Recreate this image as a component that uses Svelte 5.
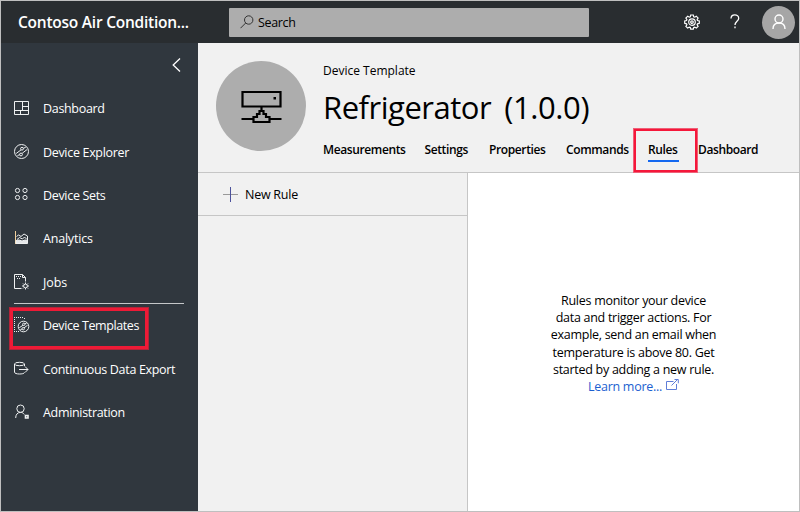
<script>
  const main = [
    { id: 'dashboard', label: 'Dashboard' },
    { id: 'explorer', label: 'Device Explorer' },
    { id: 'sets', label: 'Device Sets' },
    { id: 'analytics', label: 'Analytics' },
    { id: 'jobs', label: 'Jobs' }
  ];
  const secondary = [
    { id: 'templates', label: 'Device Templates', marked: true },
    { id: 'export', label: 'Continuous Data Export' },
    { id: 'admin', label: 'Administration' }
  ];
  const tabs = [
    { label: 'Measurements', width: 81.5 },
    { label: 'Settings', width: 44.5 },
    { label: 'Properties', width: 57 },
    { label: 'Commands', width: 62 },
    { label: 'Rules', width: 30, active: true },
    { label: 'Dashboard', width: 61 }
  ];
</script>

{#snippet glyph(id)}
  <svg class="glyph" width="16" height="16" viewBox="0 0 16 16">
    {#if id === 'dashboard'}
      <path d="M.5 1.500h14v13H.5zM.5 10.500h14M8.500 1.500v9M8.500 6.500h6M6.500 10.500v4" />
    {:else if id === 'explorer'}
      <circle cx="7.500" cy="7.500" r="7" />
      <circle cx="8" cy="4.700" r="1.400" /><circle cx="7" cy="10.500" r="1.400" />
      <path d="M7 5.900 2.200 9.500M8.200 9.300l4.900-3.800M3.500 11.500l2.200-.8M9.300 4.300l2.400-1" />
    {:else if id === 'sets'}
      <circle cx="3.500" cy="3.500" r="2.100" /><circle cx="11" cy="3.500" r="2.100" />
      <circle cx="3.500" cy="10.500" r="2.100" /><circle cx="11" cy="10.500" r="2.100" />
    {:else if id === 'analytics'}
      <path d="M1.500 1v13" stroke="#f1cf9a" /><path class="fill" d="M2 10.500l3-.5 3 1 3-1 2.500.5v3H2z" />
      <path d="M2.500 6.500l2-1.500 2.500 1.500 3-2.500 3.500 2v5M3 9.500l2.500-2 3 1.500 2-2 2.500 2.500" />
    {:else if id === 'jobs'}
      <path d="M7.500 14.500h-7V.5h8l3 3v4M8.500.5v3h3" /><path d="M2 2.500h5M3 4.500h4" stroke-dasharray="1 1" />
      <circle cx="11.500" cy="12" r="1.900" />
      <path d="M11.500 8.500v1.500M11.500 14v1.500M8 12h1.500M13.500 12H15M9 9.500l1 1M13 13.500l1 1M9 14.500l1-1M13 10.500l1-1" />
    {:else if id === 'templates'}
      <path d="M.5 0v15M2 .5h8M10.500 1v2M2 14.500h3" stroke-dasharray="1 1" />
      <circle cx="9.500" cy="9.500" r="5.300" />
      <circle cx="9.800" cy="7.300" r="1.200" /><circle cx="9.200" cy="11.700" r="1.200" />
      <path d="M9 8.300 5.300 10.700M10 10.900l3.600-2.700M10.800 6.900l1.900-.9M8.200 12l-1.800.6" />
    {:else if id === 'export'}
      <ellipse cx="5.500" cy="3" rx="5" ry="1.700" />
      <path d="M.5 3v8.200c0 2.300 9.500 2.400 10 .3M10.500 3v2M5 8.500h9M11 5.500l3 3-3 3" />
    {:else}
      <circle cx="6.500" cy="4.700" r="3.700" />
      <path d="M1.700 14c0-3.500 1.800-5.600 4.800-5.600 1.700 0 3 .8 3.800 2.100" /><path d="M11.500 11.500h2.500V14h-2.500z" stroke-width="1.600" />
    {/if}
  </svg>
{/snippet}

{#snippet navItem(item)}
  <li class={item.id}>
    {@render glyph(item.id)}
    <span>{item.label}</span>
    {#if item.marked}<i class="mark"></i>{/if}
  </li>
{/snippet}

<div class="app">
  <header class="top">
    <div class="brand">Contoso Air Condition...</div>
    <div class="search">
      <svg width="14" height="14" viewBox="0 0 14 14"><circle cx="8.700" cy="5" r="4.200" /><path d="M5.700 8 .5 13.200" /></svg>
      <span>Search</span>
    </div>
    <div class="tools">
      <svg class="gear" width="16" height="16" viewBox="0 0 16 16">
        <path d="M6.700 1h2.600l.4 1.800 1 .4 1.600-1 1.800 1.800-1 1.600.4 1 1.800.4v2.300l-1.800.5-.4 1 1 1.500-1.800 1.800-1.600-1-1 .4-.4 1.700H6.700l-.4-1.700-1-.4-1.600 1-1.800-1.800 1-1.500-.4-1L.7 9.300V7l1.800-.4.4-1-1-1.600 1.800-1.800 1.600 1 1-.4z" />
        <circle cx="8" cy="8.100" r="3.300" /><circle cx="8" cy="8.100" r="1.300" />
      </svg>
      <svg class="help" width="12" height="16" viewBox="0 0 12 16"><path d="M2 4.500C2 2 3.800.8 5.800.8S9.700 2 9.700 4.200C9.700 7.200 6 7.300 6 11" /><path d="M6 12.500v1.700" /></svg>
      <div class="avatar">
        <svg width="14" height="16" viewBox="0 0 14 16"><circle cx="7" cy="5" r="4" /><path d="M1 15C1 11.200 3.500 9 7 9s6 2.200 6 6" /></svg>
      </div>
    </div>
  </header>

  <div class="body">
    <nav>
      <svg class="collapse" width="9" height="14" viewBox="0 0 9 14"><path d="M8 .5 1.200 7 8 13.500" /></svg>
      <ul>
        {#each main as item}{@render navItem(item)}{/each}
      </ul>
      <hr />
      <ul>
        {#each secondary as item}{@render navItem(item)}{/each}
      </ul>
    </nav>

    <main>
      <section class="title">
        <div class="badge">
          <svg width="42" height="36" viewBox="0 0 42 36">
            <path d="M2.500 3h38v14.500h-38zM21.500 17.500V22M1.500 30H13M29.500 30h12M13.500 28h3.500v-3h2.500v-3h4v3h2.500v3h3.500v5h-16z" />
            <path class="dot" d="M33.500 8H36v2.500h-2.500z" />
          </svg>
        </div>
        <div class="info">
          <div class="kind">Device Template</div>
          <h1><span class="name">Refrigerator</span><span class="version">(1.0.0)</span></h1>
          <div class="tabs">
            {#each tabs as tab}
              <div class="tab {tab.label.toLowerCase()}" class:active={tab.active} style:width="{tab.width}px">
                {tab.label}
                {#if tab.active}<i class="mark"></i>{/if}
              </div>
            {/each}
          </div>
        </div>
      </section>

      <div class="panes">
        <aside>
          <div class="new">
            <svg width="15" height="15" viewBox="0 0 15 15"><path d="M0 7.500h15" stroke="#999" /><path d="M7.500 0v15" stroke="#4c529c" /></svg>
            <span>New Rule</span>
          </div>
        </aside>
        <section class="empty">
          <p>
            <span>Rules monitor your device</span><span>data and trigger actions. For</span><span>example, send an email when</span><span>temperature is above 80. Get</span><span>started by adding a new rule.</span>
            <a href="#learn"><span>Learn more...</span><svg width="13" height="11" viewBox="0 0 13 11"><path d="M7.500 2.500h-7v8h10V5M5.500 6.500l6-6M8.500.5h3.800v3.800" /></svg></a>
          </p>
        </section>
      </div>
    </main>
  </div>
</div>

<style>
  :global(body) { margin: 0; }
  * { box-sizing: border-box; }
  .app {
    width: 800px; height: 512px; border: 1px solid #bfbfbf;
    display: flex; flex-direction: column; background: #fff; overflow: hidden;
    font-family: "Open Sans", "Noto Sans", sans-serif; font-size: 12.5px; color: #000;
    white-space: nowrap;
  }
  svg { display: block; flex: none; fill: none; stroke: currentColor; }
  .top { height: 42px; flex: none; display: flex; align-items: center; background: #292d30; color: #fff; }
  .brand { width: 228px; padding-left: 17px; font-size: 15.5px; font-weight: 600; letter-spacing: -.24px; }
  .search {
    width: 360px; height: 29px; display: flex; align-items: center; gap: 4px;
    padding-left: 11px; background: #adadad; color: #000; border-radius: 1px; letter-spacing: -.33px;
  }
  .search svg { stroke: #333; }
  .tools { display: flex; align-items: center; margin-left: 95px; }
  .gear { stroke-width: 1.200; margin-top: -1px; }
  .help { margin-left: 29px; stroke-width: 1.3; margin-top: -1px; }
  .avatar { width: 33px; height: 33px; margin-left: 21px; border-radius: 50%; background: #a6a6a6; display: flex; align-items: center; justify-content: center; }
  .avatar svg { stroke-width: 1.4; }
  .body { flex: 1; display: flex; min-height: 0; }
  nav { width: 197px; background: #30373e; color: #fff; flex: none; letter-spacing: -.32px; }
  .collapse { margin: 15px 0 0 171px; stroke-width: 1.3; }
  ul { list-style: none; margin: 0; padding: 0; }
  nav ul:first-of-type { padding-top: 15px; }
  li { position: relative; height: 43.4px; padding-left: 13px; display: flex; align-items: center; gap: 13px; }
  .jobs { letter-spacing: -.1px; }
  .analytics { letter-spacing: -.2px; }
  .templates { letter-spacing: -.4px; }
  .glyph { stroke: #eef0f1; margin-top: -1px; }
  .glyph .fill { fill: #e5e7e9; }
  hr { width: 170px; height: 1px; margin: -1px 0 0 13px; border: 0; background: #c5c7c9; }
  .mark { position: absolute; border: 3px solid #ee1a36; box-shadow: 0 0 0 1px #b12439; }
  li .mark { left: 9px; top: 4px; width: 138px; height: 41px; }
  main { flex: 1; display: flex; flex-direction: column; background: #f1f1f1; min-width: 0; }
  .title { height: 130px; flex: none; display: flex; border-bottom: 1px solid #c6c6c6; }
  .badge { width: 90px; height: 90px; margin: 18px 0 0 18px; border-radius: 50%; background: #adadad; display: flex; align-items: center; justify-content: center; }
  .badge svg { stroke-width: 2.200; margin-top: 2px; }
  .badge .dot { fill: #000; stroke: none; }
  .info { margin-left: 17px; }
  .kind { margin-top: 19px; line-height: 17px; font-size: 12px; }
  h1 { margin: 7px 0 0; font-size: 31px; line-height: 42px; font-weight: 400; display: flex; gap: 13px; }
  .name { letter-spacing: -.48px; }
  .version { letter-spacing: -.4px; }
  .tabs { display: flex; gap: 20px; margin-top: 13px; line-height: 18px; font-size: 12px; font-weight: 600; letter-spacing: -.38px; }
  .tab { position: relative; flex: none; }
  .active::after { content: ""; position: absolute; left: 0; right: -1px; bottom: -3px; height: 2px; background: #1468f0; }
  .tab .mark { left: -14px; top: -12px; width: 63px; height: 43px; border-width: 2px; border-color: #f5173a; box-shadow: 0 0 0 1px #ee6078; }
  .panes { flex: 1; display: flex; }
  aside { width: 270px; border-right: 1px solid #c6c6c6; }
  .new { height: 43px; display: flex; align-items: center; gap: 7px; padding-left: 25px; border-bottom: 1px solid #c6c6c6; letter-spacing: -.25px; }
  .empty { flex: 1; background: #fff; }
  p { margin: 119px 0 0; display: flex; flex-direction: column; align-items: center; line-height: 17.2px; letter-spacing: -.28px; }
  a { display: flex; gap: 4px; color: #1c5fd0; text-decoration: none; }
  a svg { stroke: #5f7ed8; margin-top: 1px; }
</style>
